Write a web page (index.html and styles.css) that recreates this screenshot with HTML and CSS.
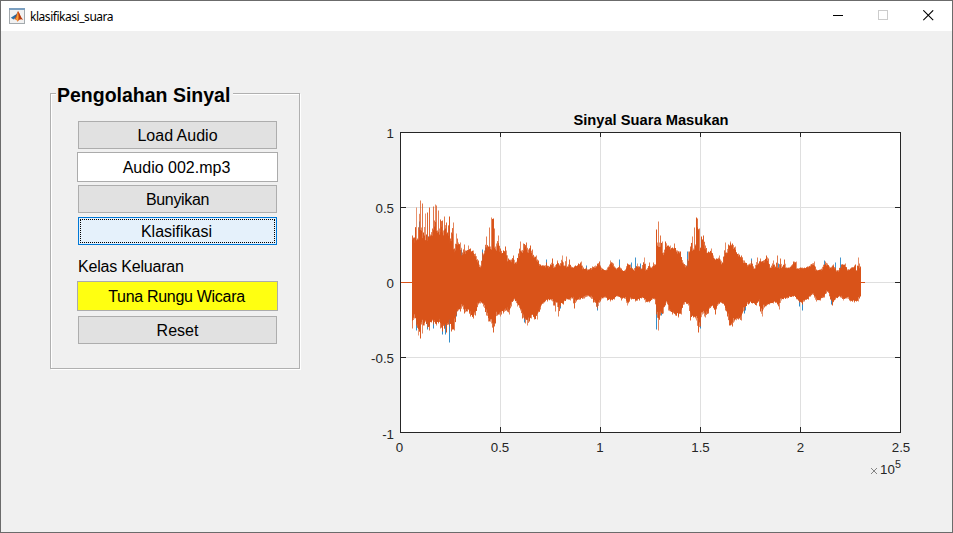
FILE: index.html
```html
<!DOCTYPE html>
<html lang="id">
<head>
  <meta charset="UTF-8">
  <title>klasifikasi_suara</title>
  <link rel="stylesheet" href="styles.css">
</head>
<body>
  <div class="window">
    <header class="titlebar">
      <svg class="app-icon" width="16" height="16" viewBox="0 0 16 16">
        <rect x="0.5" y="0.5" width="15" height="15" fill="#f1f1f1" stroke="#a3a9ad"/>
        <rect x="0" y="0" width="16" height="2" fill="#7b9fc0"/>
        <path d="M1.8 9.8L5.2 7.6L7.4 9.2L4.5 11.6Z" fill="#2d71a8"/>
        <path d="M5 7.8L7.3 6.2L9 3.2L8 9L6.5 10.4Z" fill="#31638f"/>
        <path d="M9 3C10.4 4 11.2 9 14.2 11.8C11.8 10.8 10.6 11.4 8.6 13.8C8 12.2 7 11 5.2 11.2C7.5 9 8 5 9 3Z" fill="#dd5a1b"/>
        <path d="M8.8 4.2C9.7 7 9.5 10.5 8.6 13.4C8 12 7.4 11.2 6.8 10.9C8.2 9 8.3 6 8.8 4.2Z" fill="#f5a33a"/>
        <path d="M9.4 3.8C10.8 6 11.2 9 14.2 11.8C12 10.6 11 11 10.4 11.6Z" fill="#b03a14"/>
      </svg>
      <span class="title">klasifikasi_suara</span>
      <div class="controls">
        <svg width="11" height="11"><path d="M0 5.5H10" stroke="#000"/></svg>
        <svg width="11" height="11"><rect x="0.5" y="0.5" width="9" height="9" fill="none" stroke="#ccc"/></svg>
        <svg width="11" height="11"><path d="M0.3 0.3L10.2 10.2M10.2 0.3L0.3 10.2" stroke="#000" stroke-width="1.1"/></svg>
      </div>
    </header>

    <main>
      <section class="panel">
        <h2>Pengolahan Sinyal</h2>
        <button>Load Audio</button>
        <div class="field">Audio 002.mp3</div>
        <button class="play">Bunyikan</button>
        <button class="focused">Klasifikasi</button>
        <p>Kelas Keluaran</p>
        <div class="field result">Tuna Rungu Wicara</div>
        <button>Reset</button>
      </section>

      <svg class="axes" width="560" height="390" viewBox="360 100 560 390">
        <rect x="400" y="132" width="500" height="300" fill="#fff"/>
        <path class="grid" d="M500.5 133V432M600.5 133V432M700.5 133V432M800.5 133V432M401 207.5H900M401 282.5H900M401 357.5H900"/>
        <g id="wave"></g>
        <rect class="frame" x="400.5" y="132.5" width="500" height="300"/>
        <path class="frame" d="M500.5 133v4M600.5 133v4M700.5 133v4M800.5 133v4M500.5 432v-5M600.5 432v-5M700.5 432v-5M800.5 432v-5M401 207.5h5M401 357.5h5M900 207.5h-5M900 282.5h-5M900 357.5h-5"/>
        <text class="chart-title" x="651" y="125">Sinyal Suara Masukan</text>
        <g class="y-labels">
          <text x="394" y="138">1</text>
          <text x="394" y="213">0.5</text>
          <text x="394" y="288">0</text>
          <text x="394" y="363">-0.5</text>
          <text x="394" y="439">-1</text>
        </g>
        <g class="x-labels">
          <text x="399.5" y="452">0</text>
          <text x="500" y="452">0.5</text>
          <text x="600" y="452">1</text>
          <text x="700.5" y="452">1.5</text>
          <text x="800.5" y="452">2</text>
          <text x="901" y="452">2.5</text>
        </g>
        <path d="M871 468l6 6M877 468l-6 6" stroke="#777" stroke-width="0.9"/>
        <text class="exp" x="880" y="474">10</text>
        <text class="exp small" x="895" y="468">5</text>
      </svg>
    </main>
  </div>

  <script src="wave.js"></script>
</body>
</html>
```
FILE: styles.css
```css
body {
  margin: 0;
  font-family: "Liberation Sans", Arial, sans-serif;
  color: #000;
}
.window {
  box-sizing: border-box;
  width: 953px;
  height: 533px;
  border: 1px solid #6b6b6b;
  background: #f0f0f0;
  overflow: hidden;
}
.titlebar {
  display: flex;
  align-items: center;
  height: 30px;
  padding: 0 18px 0 8px;
  background: #fff;
}
.app-icon {
  margin-top: -1px;
}
.title {
  margin-left: 5px;
  font: 12px "Noto Sans", "Open Sans", sans-serif;
  letter-spacing: -0.46px;
}
.controls {
  display: flex;
  gap: 34px;
  margin: -1px 0 0 auto;
}
.controls svg {
  display: block;
}
main {
  display: flex;
  align-items: flex-start;
}
.panel {
  box-sizing: border-box;
  width: 250px;
  height: 276px;
  margin: 62px 0 0 49px;
  padding: 0 22px 0 27px;
  border: 1px solid #b0b0b0;
  box-shadow: 1px 1px 0 #fff, inset 1px 1px 0 #fff;
}
h2 {
  width: 177px;
  height: 24px;
  margin: -11px 0 14px -22px;
  padding-left: 1px;
  box-sizing: border-box;
  background: #f0f0f0;
  font-size: 19.5px;
  line-height: 25px;
  white-space: nowrap;
}
button {
  display: block;
  box-sizing: border-box;
  width: 199px;
  height: 28px;
  padding: 2px 0 0;
  border: 1px solid #adadad;
  border-radius: 0;
  background: #e1e1e1;
  font: 16px "Liberation Sans", Arial, sans-serif;
  color: #000;
}
.field {
  box-sizing: border-box;
  width: 201px;
  height: 30px;
  margin: 3px -1px;
  padding-right: 2px;
  border: 1px solid #ababab;
  background: #fff;
  font-size: 16px;
  line-height: 29px;
  text-align: center;
}
.result {
  margin: 0 -1px 5px;
  background: #ffff11;
  letter-spacing: -0.3px;
}
.play {
  letter-spacing: -0.35px;
}
.focused {
  margin-top: 4px;
  padding-right: 2px;
  border-color: #0078d7;
  background: #e5f1fb;
  outline: 1px dotted #000;
  outline-offset: -3px;
}
p {
  margin: 0;
  padding-top: 12px;
  height: 24px;
  font-size: 16px;
  line-height: 20px;
  letter-spacing: -0.2px;
}
.axes {
  margin: 69px 0 0 60px;
}
.grid {
  stroke: #dfdfdf;
}
.frame {
  fill: none;
  stroke: #262626;
}
.chart-title {
  font-size: 14.7px;
  font-weight: bold;
  text-anchor: middle;
}
.x-labels,
.y-labels,
.exp {
  font-size: 13.3px;
  fill: #262626;
}
.x-labels {
  text-anchor: middle;
}
.y-labels {
  text-anchor: end;
}
.small {
  font-size: 10.7px;
}
```
FILE: wave.js
```js
const ORANGE = '#d95319';
const BLUE = '#0072bd';
const X0 = 400;
const Y0 = 282.5;

// [offset, height] pairs, in pixels from the zero line
const upper = [
  [12,47],[14,45],[16,75],[17,44],[20,82],[21,55],[22,79],[23,50],[25,69],[26,48],[27,70],[28,46],[29,75],[30,48],[32,54],
  [33,76],[34,62],[35,78],[36,77],[37,52],[38,72],[39,54],[40,63],[42,62],[43,52],[44,66],[46,60],[47,50],[49,66],[50,44],
  [51,50],[53,60],[54,34],[56,49],[58,40],[60,40],[62,30],[64,38],[65,32],[68,37],[70,34],[73,32],[75,29],[78,22],[80,17],
  [82,30],[84,32],[86,46],[88,36],[89,55],[90,36],[91,65],[93,64],[94,54],[95,36],[96,39],[98,47],[100,34],[103,32],[105,36],
  [108,24],[111,23],[113,27],[115,20],[118,29],[120,41],[121,32],[123,39],[126,40],[128,33],[130,37],[132,33],[134,26],
  [136,27],[138,22],[140,18],[144,17],[146,20],[149,16],[152,24],[154,16],[157,22],[159,18],[162,27],[164,17],[166,26],
  [167,16],[169,23],[171,16],[175,17],[178,19],[181,21],[183,15],[186,15],[188,13],[192,16],[195,17],[199,21],[202,14],
  [206,13],[210,22],[213,19],[216,14],[219,17],[221,14],[224,12],[227,19],[230,18],[233,13],[237,19],[241,14],[244,25],
  [246,13],[249,20],[251,15],[253,20],[255,18],[256,53],[257,40],[258,61],[259,40],
  [260,47],[262,41],[263,30],[265,41],[268,37],[270,37],[272,35],[274,39],[277,32],[280,31],[283,20],[286,17],[288,31],
  [290,36],[292,46],[293,34],[294,55],[295,38],[296,65],[297,64],[299,54],[300,35],[301,46],[303,47],[305,37],[308,31],
  [311,34],[313,27],[316,24],[319,27],[322,20],[325,40],[326,30],[328,38],[330,41],[332,39],[335,36],[338,29],[341,27],
  [344,22],[348,18],[351,22],[354,14],[357,25],[358,19],[360,24],[363,22],[366,27],[368,24],[370,15],[373,22],[375,16],
  [377,27],[378,15],[380,24],[382,16],[384,23],[386,15],[389,15],[393,21],[396,21],[397,14],[400,15],[404,15],[407,16],
  [410,18],[414,21],[416,13],[420,13],[425,21],[427,19],[430,15],[433,18],[437,12],[441,18],[445,19],[447,13],[451,15],
  [455,18],[456,12],[458,25],[459,19],[460,16]
];
const lower = [
  [12,46],[14,36],[16,43],[18,53],[20,56],[21,42],[22,51],[24,43],[27,45],[29,48],[31,40],[33,42],[36,43],[38,41],[40,46],
  [42,49],[44,46],[46,50],[48,42],[49,44],[51,49],[54,48],[56,33],[58,28],[60,29],[62,24],[64,31],[67,29],[70,34],[73,36],
  [75,33],[78,22],[80,21],[83,24],[86,33],[88,39],[91,41],[93,50],[95,41],[97,33],[100,34],[103,31],[106,28],[109,32],
  [111,24],[114,17],[117,24],[120,28],[122,36],[125,41],[127,43],[129,39],[131,36],[134,37],[137,37],[140,27],[143,21],
  [147,19],[151,18],[153,23],[155,29],[156,20],[158,34],[160,24],[163,22],[166,17],[170,18],[172,16],[174,26],[176,19],
  [180,17],[184,16],[187,14],[190,15],[193,20],[197,26],[200,19],[204,15],[207,18],[210,19],[214,17],[217,14],[221,18],
  [224,16],[227,23],[231,17],[235,19],[239,18],[242,15],[245,20],[249,20],[254,17],[256,32],[258,48],[260,33],[263,31],
  [266,20],[268,28],[272,32],[275,33],[278,35],[281,32],[284,22],[288,23],[290,38],[293,35],[296,38],[298,50],[300,44],
  [302,32],[305,35],[308,31],[311,24],[315,32],[318,22],[322,21],[325,28],[327,34],[329,43],[332,44],[334,39],[338,37],
  [341,38],[344,28],[348,22],[352,21],[356,23],[358,19],[360,29],[362,34],[364,25],[369,22],[373,21],[377,22],[379,27],
  [381,18],[387,16],[393,14],[399,20],[402,22],[404,19],[408,17],[412,12],[416,19],[420,18],[424,15],[427,9],[430,17],
  [432,23],[435,17],[440,15],[443,18],[447,16],[450,19],[454,20],[458,19],[460,14]
];

// thin strokes of the first channel that show past the second
const blueUp = [[19,61],[28,46],[44,53],[61,33],[82,33],[85,35],[146,23],[186,17],[219,23],[231,20],[235,25],[240,19],
  [287,31],[307,24],[351,24],[378,19],[391,16],[424,22],[435,20],[440,25]];
const blueDown = [[16,48],[27,47],[33,46],[42,52],[45,52],[49,60],[56,34],[64,28],[94,41],[124,40],[160,26],[197,28],
  [256,47],[261,33],[300,46],[344,31],[345,28],[399,24],[402,28],[431,22]];

const wave = document.getElementById('wave');

function bar(x, y1, y2, color, opacity) {
  const line = document.createElementNS('http://www.w3.org/2000/svg', 'path');
  line.setAttribute('d', `M${X0 + x + 0.5} ${y1}V${y2}`);
  line.setAttribute('stroke', color);
  line.setAttribute('stroke-opacity', opacity);
  wave.appendChild(line);
}

function heightAt(points, x) {
  for (let i = 1; i < points.length; i++) {
    const [xa, ya] = points[i - 1];
    const [xb, yb] = points[i];
    if (x <= xb) {
      return ya + (yb - ya) * (x - xa) / (xb - xa);
    }
  }
  return points[points.length - 1][1];
}

// dense part of the signal around x
function bodyHeight(points, x) {
  let low = 100;
  for (let i = -1; i <= 1; i++) {
    low = Math.min(low, heightAt(points, Math.max(12, x + i)));
  }
  return low * (0.88 + noise(x + 77) * 0.12);
}

function noise(n) {
  const v = Math.sin(n * 127.1 + 3.7) * 43758.5453;
  return v - Math.floor(v);
}

blueUp.forEach(([x, h]) => bar(x, Y0, Y0 - h, BLUE, 0.75));
blueDown.forEach(([x, h]) => bar(x, Y0, Y0 + h, BLUE, 0.8));

for (let x = 12; x <= 460; x++) {
  const keyUp = upper.some(p => p[0] === x);
  const keyDown = lower.some(p => p[0] === x);
  const top = heightAt(upper, x) * (keyUp ? 1 : 0.9 + noise(x) * 0.1);
  const bottom = heightAt(lower, x) * (keyDown ? 1 : 0.88 + noise(x + 500) * 0.12);
  bar(x, Y0, Y0 - top, ORANGE, 0.6 + noise(x + 900) * 0.4);
  bar(x, Y0, Y0 + bottom, ORANGE, 0.6 + noise(x + 1300) * 0.4);
  bar(x, Y0 - bodyHeight(upper, x), Y0 + bodyHeight(lower, x), ORANGE, 1);
}

// silence before and after the sound
const rest = document.createElementNS('http://www.w3.org/2000/svg', 'path');
rest.setAttribute('d', 'M401 282.5H412M861 282.5H865');
rest.setAttribute('stroke', ORANGE);
wave.appendChild(rest);
```
